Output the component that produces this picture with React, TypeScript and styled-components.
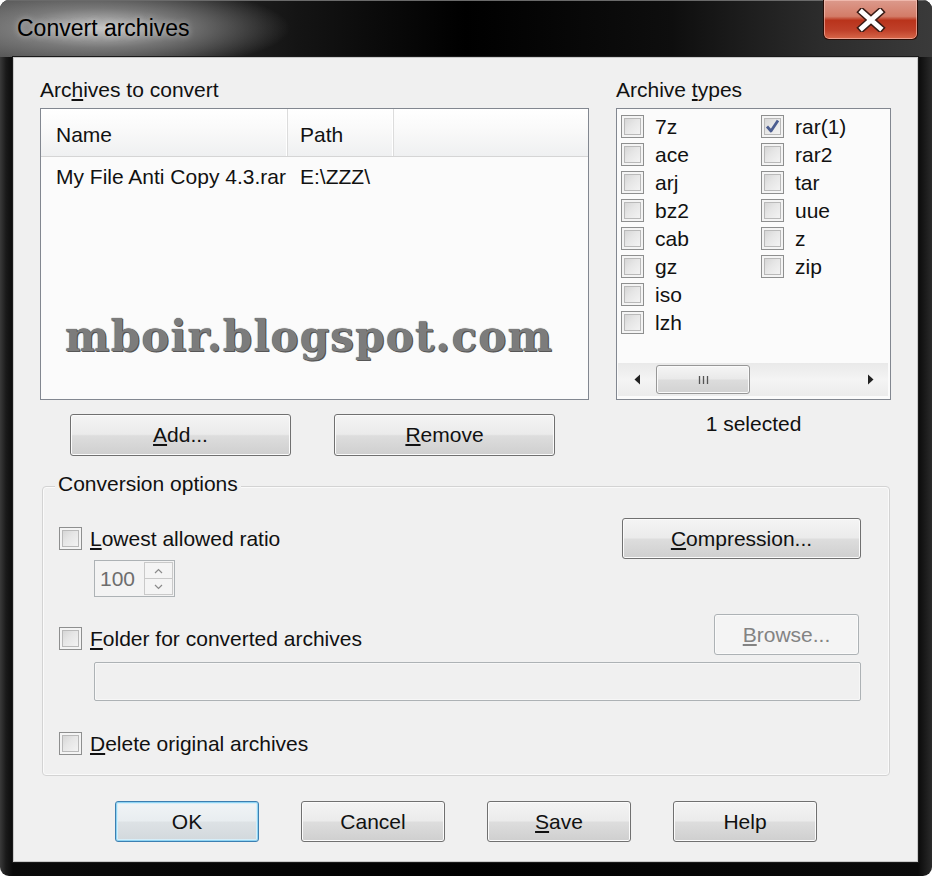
import React from 'react';
import styled, { createGlobalStyle, css } from 'styled-components';

const GlobalStyle = createGlobalStyle`
  html, body { margin: 0; padding: 0; background: #ffffff; }
  body { font-family: "Liberation Sans", Arial, sans-serif; color: #111; }
  * { box-sizing: border-box; }
`;

const Window = styled.div`
  width: 932px;
  height: 876px;
  border-radius: 9px;
  overflow: hidden;
  display: flex;
  flex-direction: column;
  background: linear-gradient(90deg, #3a3a3a 0px, #1a1a1a 6px, #0a0a0a 13px, #000 50%, #0a0a0a calc(100% - 14px), #2a2a2a 100%);
`;

const TitleBar = styled.div`
  height: 57px;
  flex: none;
  display: flex;
  align-items: flex-start;
  justify-content: space-between;
  background:
    radial-gradient(ellipse 190px 44px at 100px 28px, rgba(205,205,205,0.95) 0%, rgba(140,140,140,0.75) 45%, rgba(0,0,0,0) 100%),
    linear-gradient(90deg, #4a4a4a 0%, #141414 32%, #000 50%, #0e0e0e 72%, #2c2c2c 88%, #3a3a3a 100%);
  box-shadow: inset 0 1px 0 #6a6a6a;
`;

const Title = styled.div`
  padding: 15px 0 0 17px;
  font-size: 23px;
  line-height: 26px;
  color: #000;
  text-shadow: 0 0 6px rgba(230,230,230,0.7);
`;

const CloseButton = styled.div`
  width: 95px;
  height: 40px;
  margin-right: 14px;
  border: 1px solid #2a0d06;
  border-top: none;
  border-radius: 0 0 6px 6px;
  display: flex;
  align-items: center;
  justify-content: center;
  background: linear-gradient(180deg, #dc9a8c 0%, #d37c68 42%, #b9331b 52%, #c0412a 78%, #d8684a 100%);
  box-shadow: inset 0 0 0 1px rgba(255, 210, 200, 0.55);
`;

const Frame = styled.div`
  flex: 1;
  display: flex;
  padding: 0 14px 14px 13px;
`;

const Client = styled.div`
  flex: 1;
  background: #f0f0f0;
  border: 1px solid #c9c9c9;
  box-shadow: 0 0 0 1px #1a1a1a;
  padding: 20px 26px 0 26px;
  display: flex;
  flex-direction: column;
`;

const TopGrid = styled.div`
  display: grid;
  grid-template-columns: 549px 1fr;
  column-gap: 27px;
`;

const Pane = styled.div`
  display: flex;
  flex-direction: column;
`;

const Label = styled.div`
  font-size: 21px;
  line-height: 24px;
  height: 24px;
  margin-bottom: 6px;
  color: #111;
`;

const U = styled.span`
  text-decoration: underline;
  text-underline-offset: 2px;
`;

const ListBox = styled.div`
  position: relative;
  height: 292px;
  background: #fbfbfb;
  border: 1px solid #828790;
  display: flex;
  flex-direction: column;
`;

const ListHeader = styled.div`
  display: flex;
  height: 48px;
  background: linear-gradient(180deg, #ffffff 0%, #f9f9f9 45%, #eff0f1 100%);
  border-bottom: 1px solid #d5d5d5;
`;

const HeaderCell = styled.div<{ $w?: number }>`
  ${(p) => (p.$w ? css`width: ${p.$w}px;` : css`flex: 1;`)}
  display: flex;
  align-items: center;
  padding: 5px 0 0 ${(p) => (p.$w === 247 ? 15 : 12)}px;
  font-size: 21px;
  border-right: ${(p) => (p.$w ? '1px solid #dcdcdc' : 'none')};
  box-shadow: ${(p) => (p.$w ? 'inset -1px 0 0 #ffffff' : 'none')};
`;

const ListRow = styled.div`
  display: flex;
  margin-top: 8px;
  font-size: 21px;
  line-height: 24px;
`;

const RowCell = styled.div<{ $w?: number; $pad: number }>`
  ${(p) => (p.$w ? css`width: ${p.$w}px;` : css`flex: 1;`)}
  padding-left: ${(p) => p.$pad}px;
  white-space: nowrap;
`;

const Watermark = styled.div`
  position: absolute;
  left: 24px;
  top: 207px;
  font-family: "DejaVu Serif", "Liberation Serif", serif;
  font-weight: bold;
  font-size: 42px;
  line-height: 42px;
  letter-spacing: 1.2px;
  color: #7c7c7c;
  text-shadow: 0 0 1px #3a3a3a, 1px 1px 0 #5a5a5a;
  white-space: nowrap;
  pointer-events: none;
`;

const ButtonRow = styled.div`
  display: flex;
  gap: 43px;
  margin-top: 14px;
  padding-left: 30px;
`;

const Button = styled.div<{ $w: number; $h: number; $variant?: 'default' | 'disabled' }>`
  width: ${(p) => p.$w}px;
  height: ${(p) => p.$h}px;
  border: 1px solid #707070;
  border-radius: 3px;
  display: flex;
  align-items: center;
  justify-content: center;
  font-size: 21px;
  color: #111;
  background: linear-gradient(180deg, #f4f4f4 0%, #ebebeb 48%, #dddddd 52%, #cfcfcf 100%);
  box-shadow: inset 0 0 0 1px #fbfbfb;
  ${(p) =>
    p.$variant === 'default' &&
    css`
      border-color: #3c7fb1;
      box-shadow: inset 0 0 0 1px #8fd4f3, inset 0 0 0 2px #d6eef9;
      background: linear-gradient(180deg, #f1f4f6 0%, #e8edf0 48%, #dde2e5 52%, #d2d8dc 100%);
    `}
  ${(p) =>
    p.$variant === 'disabled' &&
    css`
      border-color: #adb2b5;
      color: #838383;
      background: #f4f4f4;
      box-shadow: inset 0 0 0 1px #fafafa;
    `}
`;

const TypesBox = styled.div`
  height: 292px;
  background: #fbfbfb;
  border: 1px solid #828790;
  display: flex;
  flex-direction: column;
`;

const TypesGrid = styled.div`
  flex: 1;
  display: grid;
  grid-template-columns: 140px 1fr;
  grid-template-rows: repeat(8, 23px);
  grid-auto-flow: column;
  row-gap: 5px;
  padding: 6px 0 0 4px;
`;

const TypeItem = styled.div`
  display: flex;
  align-items: center;
  gap: 11px;
  font-size: 21px;
  line-height: 23px;
`;

const Box = styled.span`
  width: 23px;
  height: 23px;
  flex: none;
  border: 1px solid #8e8f8f;
  background: linear-gradient(135deg, #cfcfcf 0%, #e6e6e6 45%, #f7f7f7 100%);
  box-shadow: inset 0 0 0 2px #f4f4f4, inset 0 0 0 3px #b9b9b9;
  display: flex;
  align-items: center;
  justify-content: center;
`;

const ScrollBar = styled.div`
  height: 33px;
  margin: 0 2px 3px 1px;
  display: flex;
  align-items: stretch;
  background: linear-gradient(180deg, #e9e9e9 0%, #f4f4f4 50%, #ececec 100%);
`;

const ArrowBtn = styled.div<{ $w: number }>`
  width: ${(p) => p.$w}px;
  display: flex;
  align-items: center;
  justify-content: center;
`;

const Thumb = styled.div`
  width: 94px;
  margin: 2px 0;
  border: 1px solid #979797;
  border-radius: 3px;
  background: linear-gradient(180deg, #f5f5f5 0%, #e9e9e9 48%, #dcdcdc 52%, #d2d2d2 100%);
  box-shadow: inset 0 0 0 1px #fafafa;
  display: flex;
  align-items: center;
  justify-content: center;
`;

const Track = styled.div`
  flex: 1;
`;

const Selected = styled.div`
  margin-top: 12px;
  text-align: center;
  font-size: 21px;
  line-height: 24px;
`;

const GroupBox = styled.div`
  position: relative;
  margin: 30px 1px 0 2px;
  border: 1px solid #d3d3d3;
  border-radius: 4px;
  box-shadow: inset 0 0 0 1px #fafafa;
  padding: 31px 28px 20px 16px;
  display: flex;
  flex-direction: column;
`;

const Legend = styled.div`
  position: absolute;
  top: -15px;
  left: 12px;
  padding: 0 3px;
  background: #f0f0f0;
  font-size: 21px;
  line-height: 24px;
`;

const OptionRow = styled.div<{ $gap: number; $align: 'center' | 'flex-start' }>`
  display: flex;
  justify-content: space-between;
  align-items: ${(p) => p.$align};
  margin-top: ${(p) => p.$gap}px;
`;

const CheckLabel = styled.div<{ $offset?: number }>`
  display: flex;
  align-items: center;
  gap: 8px;
  font-size: 21px;
  line-height: 23px;
  margin-top: ${(p) => p.$offset ?? 0}px;
`;

const Spin = styled.div`
  margin: 1px 0 0 35px;
  width: 81px;
  height: 37px;
  border: 1px solid #adb2b5;
  background: #f3f3f3;
  display: flex;
`;

const SpinValue = styled.div`
  flex: 1;
  display: flex;
  align-items: center;
  padding-left: 5px;
  font-size: 21px;
  color: #6d6d6d;
`;

const SpinButtons = styled.div`
  width: 29px;
  margin: 1px;
  border: 1px solid #c9c9c9;
  display: flex;
  flex-direction: column;
`;

const SpinHalf = styled.div<{ $top?: boolean }>`
  flex: 1;
  display: flex;
  align-items: center;
  justify-content: center;
  border-bottom: ${(p) => (p.$top ? '1px solid #c9c9c9' : 'none')};
  background: #f4f4f4;
`;

const TextField = styled.div`
  margin: 7px 0 0 35px;
  height: 39px;
  border: 1px solid #adb2b5;
  border-radius: 2px;
  background: #f0f0f0;
  box-shadow: inset 0 0 0 1px #f7f7f7;
`;

const BottomBar = styled.div`
  display: flex;
  gap: 42px;
  margin-top: 25px;
  padding-left: 75px;
`;

const CheckMark = () => (
  <svg width="19" height="19" viewBox="0 0 19 19">
    <path d="M4 9.5 L8 14 L15 3.5" fill="none" stroke="#4b5d90" strokeWidth="2.8" strokeLinejoin="round" />
  </svg>
);

const Check = ({ checked }: { checked?: boolean }) => <Box>{checked && <CheckMark />}</Box>;

const CloseX = () => (
  <svg width="30" height="24" viewBox="0 0 30 24">
    <path d="M6 4 L24 20 M24 4 L6 20" stroke="#3b1c16" strokeWidth="8" strokeLinecap="square" />
    <path d="M6 4 L24 20 M24 4 L6 20" stroke="#ffffff" strokeWidth="5" strokeLinecap="square" />
  </svg>
);

const LeftArrow = () => (
  <svg width="7" height="11" viewBox="0 0 7 11">
    <path d="M6 0.5 L0.5 5.5 L6 10.5 Z" fill="#222" />
  </svg>
);

const RightArrow = () => (
  <svg width="7" height="11" viewBox="0 0 7 11">
    <path d="M1 0.5 L6.5 5.5 L1 10.5 Z" fill="#222" />
  </svg>
);

const Grip = () => (
  <svg width="11" height="10" viewBox="0 0 11 10">
    <path d="M1.5 1 V9 M5.5 1 V9 M9.5 1 V9" stroke="#555" strokeWidth="1.3" />
  </svg>
);

const SpinArrow = ({ up }: { up?: boolean }) => (
  <svg width="9" height="6" viewBox="0 0 9 6">
    <path d={up ? 'M1 5 L4.5 1.5 L8 5' : 'M1 1 L4.5 4.5 L8 1'} fill="none" stroke="#8a8a8a" strokeWidth="1.2" />
  </svg>
);

const col1 = ['7z', 'ace', 'arj', 'bz2', 'cab', 'gz', 'iso', 'lzh'];
const col2: { name: string; checked?: boolean }[] = [
  { name: 'rar(1)', checked: true },
  { name: 'rar2' },
  { name: 'tar' },
  { name: 'uue' },
  { name: 'z' },
  { name: 'zip' },
];

export default function App() {
  return (
    <>
      <GlobalStyle />
      <Window>
        <TitleBar>
          <Title>Convert archives</Title>
          <CloseButton>
            <CloseX />
          </CloseButton>
        </TitleBar>
        <Frame>
          <Client>
            <TopGrid>
              <Pane>
                <Label>
                  Arc<U>h</U>ives to convert
                </Label>
                <ListBox>
                  <ListHeader>
                    <HeaderCell $w={247}>Name</HeaderCell>
                    <HeaderCell $w={106}>Path</HeaderCell>
                    <HeaderCell />
                  </ListHeader>
                  <ListRow>
                    <RowCell $w={247} $pad={15}>My File Anti Copy 4.3.rar</RowCell>
                    <RowCell $pad={12}>E:\ZZZ\</RowCell>
                  </ListRow>
                  <Watermark>mboir.blogspot.com</Watermark>
                </ListBox>
                <ButtonRow>
                  <Button $w={221} $h={42}>
                    <U>A</U>dd...
                  </Button>
                  <Button $w={221} $h={42}>
                    <U>R</U>emove
                  </Button>
                </ButtonRow>
              </Pane>
              <Pane>
                <Label>
                  Archive <U>t</U>ypes
                </Label>
                <TypesBox>
                  <TypesGrid>
                    {col1.map((n) => (
                      <TypeItem key={n}>
                        <Check />
                        {n}
                      </TypeItem>
                    ))}
                    {col2.map((t) => (
                      <TypeItem key={t.name}>
                        <Check checked={t.checked} />
                        {t.name}
                      </TypeItem>
                    ))}
                  </TypesGrid>
                  <ScrollBar>
                    <ArrowBtn $w={38}>
                      <LeftArrow />
                    </ArrowBtn>
                    <Thumb>
                      <Grip />
                    </Thumb>
                    <Track />
                    <ArrowBtn $w={36}>
                      <RightArrow />
                    </ArrowBtn>
                  </ScrollBar>
                </TypesBox>
                <Selected>1 selected</Selected>
              </Pane>
            </TopGrid>

            <GroupBox>
              <Legend>Conversion options</Legend>
              <OptionRow $gap={0} $align="center">
                <CheckLabel>
                  <Check />
                  <span>
                    <U>L</U>owest allowed ratio
                  </span>
                </CheckLabel>
                <Button $w={239} $h={41}>
                  <U>C</U>ompression...
                </Button>
              </OptionRow>
              <Spin>
                <SpinValue>100</SpinValue>
                <SpinButtons>
                  <SpinHalf $top>
                    <SpinArrow up />
                  </SpinHalf>
                  <SpinHalf>
                    <SpinArrow />
                  </SpinHalf>
                </SpinButtons>
              </Spin>
              <OptionRow $gap={17} $align="flex-start">
                <CheckLabel $offset={13}>
                  <Check />
                  <span>
                    <U>F</U>older for converted archives
                  </span>
                </CheckLabel>
                <Button $w={145} $h={41} $variant="disabled" style={{ marginRight: 2 }}>
                  <U>B</U>rowse...
                </Button>
              </OptionRow>
              <TextField />
              <OptionRow $gap={31} $align="center">
                <CheckLabel>
                  <Check />
                  <span>
                    <U>D</U>elete original archives
                  </span>
                </CheckLabel>
              </OptionRow>
            </GroupBox>

            <BottomBar>
              <Button $w={144} $h={41} $variant="default">OK</Button>
              <Button $w={144} $h={41}>Cancel</Button>
              <Button $w={144} $h={41}>
                <U>S</U>ave
              </Button>
              <Button $w={144} $h={41}>Help</Button>
            </BottomBar>
          </Client>
        </Frame>
      </Window>
    </>
  );
}
